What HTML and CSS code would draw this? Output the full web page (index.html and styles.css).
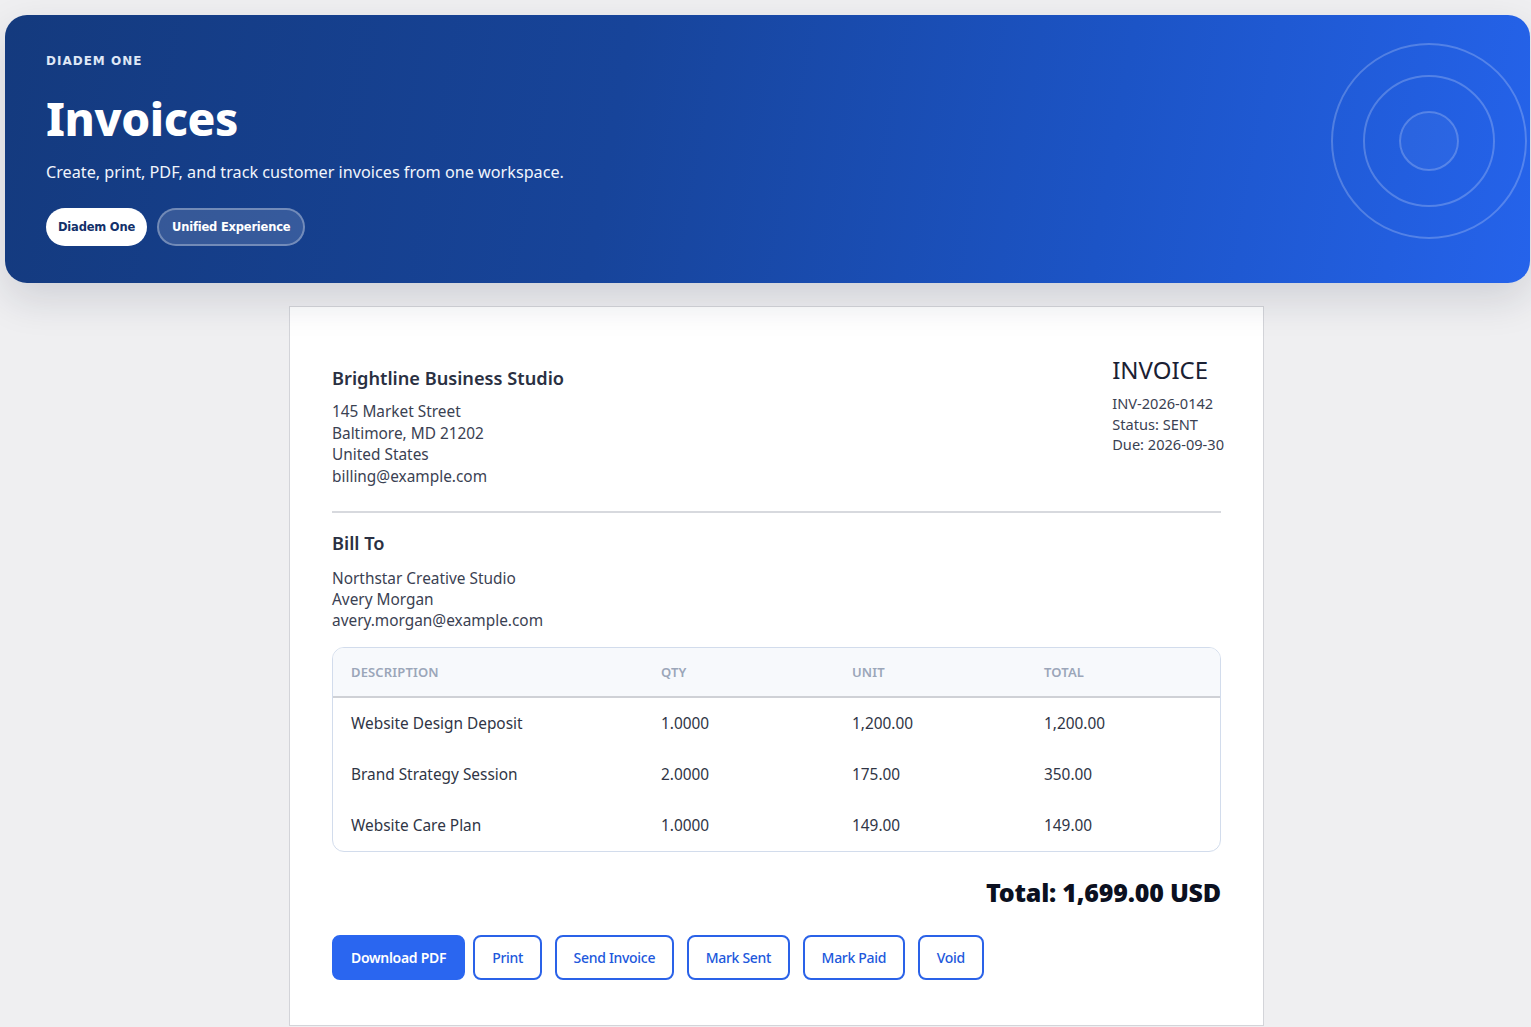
FILE: index.html
```html
<!DOCTYPE html>
<html lang="en">
<head>
<meta charset="utf-8">
<title>Invoices</title>
<link rel="stylesheet" href="styles.css">
</head>
<body>
<div class="page">
  <header class="hero">
    <div class="eyebrow">DIADEM ONE</div>
    <h1 class="title">Invoices</h1>
    <p class="subtitle">Create, print, PDF, and track customer invoices from one workspace.</p>
    <div class="badges">
      <span class="badge badge-solid">Diadem One</span>
      <span class="badge badge-ghost">Unified Experience</span>
    </div>
    <svg class="rings" width="200" height="200" viewBox="0 0 200 200" aria-hidden="true">
      <circle cx="100" cy="100" r="97" fill="none" stroke="rgba(255,255,255,0.22)" stroke-width="2"/>
      <circle cx="100" cy="100" r="65" fill="none" stroke="rgba(255,255,255,0.22)" stroke-width="2"/>
      <circle cx="100" cy="100" r="29" fill="rgba(255,255,255,0.04)" stroke="rgba(255,255,255,0.22)" stroke-width="2"/>
    </svg>
  </header>

  <main class="invoice">
    <div class="inv-top">
      <div class="from">
        <div class="company">Brightline Business Studio</div>
        <div class="lines">
          <div>145 Market Street</div>
          <div>Baltimore, MD 21202</div>
          <div>United States</div>
          <div>billing@example.com</div>
        </div>
      </div>
      <div class="meta">
        <div class="meta-title">INVOICE</div>
        <div class="meta-lines">
          <div>INV-2026-0142</div>
          <div>Status: SENT</div>
          <div>Due: 2026-09-30</div>
        </div>
      </div>
    </div>
    <hr class="divider">
    <div class="billto">
      <div class="company">Bill To</div>
      <div class="lines bill-lines">
        <div>Northstar Creative Studio</div>
        <div>Avery Morgan</div>
        <div>avery.morgan@example.com</div>
      </div>
    </div>

    <div class="table-wrap">
      <table class="items">
        <thead>
          <tr><th class="c-desc">Description</th><th class="c-qty">Qty</th><th class="c-unit">Unit</th><th>Total</th></tr>
        </thead>
        <tbody>
          <tr><td>Website Design Deposit</td><td>1.0000</td><td>1,200.00</td><td>1,200.00</td></tr>
          <tr><td>Brand Strategy Session</td><td>2.0000</td><td>175.00</td><td>350.00</td></tr>
          <tr><td>Website Care Plan</td><td>1.0000</td><td>149.00</td><td>149.00</td></tr>
        </tbody>
      </table>
    </div>

    <div class="total">Total: 1,699.00 USD</div>

    <div class="actions">
      <button class="btn btn-primary">Download PDF</button>
      <button class="btn">Print</button>
      <button class="btn">Send Invoice</button>
      <button class="btn">Mark Sent</button>
      <button class="btn">Mark Paid</button>
      <button class="btn">Void</button>
    </div>
  </main>
</div>
</body>
</html>
```

FILE: styles.css
```css
* { box-sizing: border-box; }

html, body {
  margin: 0;
  padding: 0;
  background: #efeff1;
  font-family: "Noto Sans", "Open Sans", "Liberation Sans", sans-serif;
  color: #2f3545;
}

.page {
  padding: 15px 1px 0 5px;
}

.hero {
  position: relative;
  z-index: 1;
  height: 268px;
  padding: 38px 41px 0 41px;
  border-radius: 22px;
  background: linear-gradient(100deg, #143a7e 0%, #17449a 40%, #1c54c6 72%, #2563eb 100%);
  box-shadow: 0 16px 40px rgba(20, 30, 60, 0.14);
  color: #fff;
  overflow: hidden;
}

.eyebrow {
  font-family: "DejaVu Sans", sans-serif;
  font-weight: 700;
  font-size: 12px;
  letter-spacing: 1px;
  line-height: 16px;
  color: #dfe7f6;
}

.title {
  margin: 15px 0 0 0;
  font-size: 46px;
  font-weight: 800;
  line-height: 68px;
  letter-spacing: -0.4px;
}

.subtitle {
  margin: 8px 0 0 0;
  font-size: 16.2px;
  line-height: 24px;
  color: #f1f5fc;
}

.badges {
  display: flex;
  gap: 10px;
  margin-top: 24px;
}

.badge {
  display: inline-flex;
  align-items: center;
  height: 38px;
  padding: 0 12px;
  border-radius: 19px;
  font-family: "DejaVu Sans", sans-serif;
  font-weight: 700;
  font-size: 11.5px;
  letter-spacing: -0.2px;
}

.badge-solid {
  background: #fff;
  color: #13306a;
}

.badge-ghost {
  padding: 0 13px;
  background: rgba(255, 255, 255, 0.14);
  border: 2px solid rgba(255, 255, 255, 0.3);
  color: #fff;
}

.rings {
  position: absolute;
  left: 1324px;
  top: 26px;
}

.invoice {
  position: relative;
  width: 975px;
  margin: 23px 0 0 284px;
  padding: 54px 42px 45px 42px;
  background: #fff;
  border: 1px solid #d3d4d9;
}

.inv-top {
  display: flex;
  justify-content: space-between;
  align-items: flex-start;
}

.company {
  font-size: 18.2px;
  font-weight: 600;
  line-height: 34px;
  color: #2a3042;
}

.lines {
  margin-top: 6px;
  font-size: 15.4px;
  line-height: 21.5px;
  color: #3a4152;
}

.meta {
  margin-right: -3px;
}

.meta-title {
  font-size: 24px;
  line-height: 18px;
  color: #1a2133;
}

.meta-lines {
  margin-top: 14px;
  font-size: 14.6px;
  line-height: 20.5px;
  color: #3a4152;
}

.divider {
  margin: 24px 0 0 0;
  border: 0;
  border-top: 2px solid #d7d9de;
  height: 0;
}

.billto {
  margin-top: 16px;
}

.billto .company {
  line-height: 28px;
}

.bill-lines {
  margin-top: 11px;
  line-height: 21px;
}

.table-wrap {
  margin-top: 16px;
  border: 1px solid #d2dcec;
  border-radius: 12px;
  overflow: hidden;
}

.items {
  width: 100%;
  border-collapse: collapse;
  font-size: 15.4px;
  color: #2f3545;
}

.items th {
  padding: 0 0 0 18px;
  line-height: 48px;
  background: #f7f9fc;
  border-bottom: 2px solid #cfd1d6;
  text-align: left;
  font-size: 13px;
  font-weight: 600;
  color: #9ba6b9;
  text-transform: uppercase;
  letter-spacing: 0.15px;
}

.items td {
  padding: 0 0 0 18px;
  line-height: 51px;
  text-align: left;
}

.c-desc { width: 310px; }
.c-qty { width: 191px; }
.c-unit { width: 192px; }

.total {
  margin-top: 25px;
  text-align: right;
  font-size: 25px;
  font-weight: 900;
  line-height: 30px;
  color: #0b1020;
  letter-spacing: -0.2px;
}

.actions {
  display: flex;
  gap: 12.5px;
  margin-top: 28px;
}

.btn {
  height: 45px;
  padding: 0 17px;
  border: 2px solid #2a62e8;
  border-radius: 8px;
  background: #fff;
  color: #2158dc;
  font-family: "Noto Sans", "Open Sans", sans-serif;
  font-size: 14px;
  font-weight: 500;
  letter-spacing: -0.3px;
  cursor: pointer;
}

.btn-primary {
  margin-right: -4.5px;
  background: #2a66f0;
  border-color: #2a66f0;
  color: #fff;
  font-weight: 600;
}
```
